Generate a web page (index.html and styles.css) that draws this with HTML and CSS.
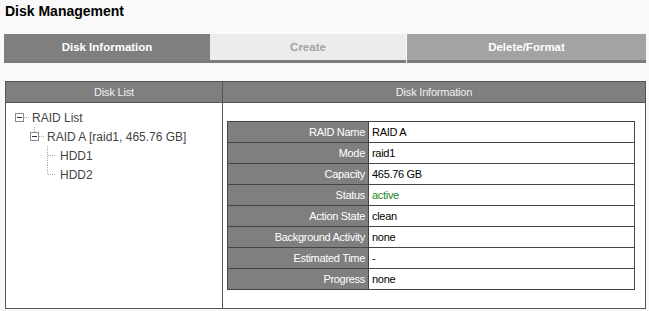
FILE: index.html
```html
<!DOCTYPE html>
<html lang="en">
<head>
  <meta charset="UTF-8">
  <title>Disk Management</title>
  <link rel="stylesheet" href="styles.css">
</head>
<body>
  <h2 class="page-title">Disk Management</h2>

  <div class="tabs">
    <div class="tab tab-active">Disk Information</div>
    <div class="tab tab-disabled">Create</div>
    <div class="tab tab-normal">Delete/Format</div>
  </div>

  <div class="panel">
    <div class="col col-left">
      <div class="col-head">Disk List</div>
      <ul class="tree">
        <li class="tree-row lvl0">
          <svg class="tree-icon" width="17" height="19" viewBox="0 0 17 19">
            <rect x="0.5" y="5.5" width="8" height="8" fill="#fff" stroke="#8c8c8c"/>
            <line x1="2" y1="9.5" x2="7" y2="9.5" stroke="#333"/>
            <line x1="9" y1="9.5" x2="14" y2="9.5" stroke="#aaa" stroke-dasharray="1 1"/>
          </svg>
          RAID List
        </li>
        <li class="tree-row lvl1">
          <svg class="tree-icon" width="17" height="19" viewBox="0 0 17 19">
            <line x1="4.5" y1="0" x2="4.5" y2="5" stroke="#aaa" stroke-dasharray="1 1"/>
            <rect x="0.5" y="5.5" width="8" height="8" fill="#fff" stroke="#8c8c8c"/>
            <line x1="2" y1="9.5" x2="7" y2="9.5" stroke="#333"/>
            <line x1="9" y1="9.5" x2="14" y2="9.5" stroke="#aaa" stroke-dasharray="1 1"/>
          </svg>
          RAID A [raid1, 465.76 GB]
        </li>
        <li class="tree-row lvl2">
          <svg class="tree-icon" width="15" height="19" viewBox="0 0 15 19">
            <line x1="2.5" y1="0" x2="2.5" y2="19" stroke="#aaa" stroke-dasharray="1 1"/>
            <line x1="3" y1="9.5" x2="10" y2="9.5" stroke="#aaa" stroke-dasharray="1 1"/>
          </svg>
          HDD1
        </li>
        <li class="tree-row lvl2">
          <svg class="tree-icon" width="15" height="19" viewBox="0 0 15 19">
            <line x1="2.5" y1="0" x2="2.5" y2="10" stroke="#aaa" stroke-dasharray="1 1"/>
            <line x1="3" y1="9.5" x2="10" y2="9.5" stroke="#aaa" stroke-dasharray="1 1"/>
          </svg>
          HDD2
        </li>
      </ul>
    </div>

    <div class="col col-right">
      <div class="col-head">Disk Information</div>
      <div class="info-wrap">
        <table class="info">
          <tr><th>RAID Name</th><td>RAID A</td></tr>
          <tr><th>Mode</th><td>raid1</td></tr>
          <tr><th>Capacity</th><td>465.76 GB</td></tr>
          <tr><th>Status</th><td class="ok">active</td></tr>
          <tr><th>Action State</th><td>clean</td></tr>
          <tr><th>Background Activity</th><td>none</td></tr>
          <tr><th>Estimated Time</th><td>-</td></tr>
          <tr><th>Progress</th><td>none</td></tr>
        </table>
      </div>
    </div>
  </div>
</body>
</html>
```

FILE: styles.css
```css
body {
  font-family: "Liberation Sans", Arial, sans-serif;
  margin: 0;
  padding: 0 3px 0 4px;
  background-color: #f9f9f9;
  color: #000;
}
.page-title {
  font-size: 14px;
  font-weight: bold;
  margin: 0;
  padding: 3px 0 0 1px;
  height: 34px;
  box-sizing: border-box;
  line-height: 17px;
}
.tabs {
  display: flex;
  width: 642px;
  height: 29px;
}
.tab {
  box-sizing: border-box;
  height: 29px;
  line-height: 26px;
  text-align: center;
  font-size: 11.5px;
  font-weight: bold;
  border-bottom: 3px solid #7a7a7a;
}
.tab-active {
  width: 206px;
  background-color: #7f7f7f;
  color: #fff;
}
.tab-disabled {
  width: 196px;
  background-color: #ececec;
  color: #a3a3a3;
  margin-right: 1px;
}
.tab-normal {
  width: 239px;
  background-color: #a3a3a3;
  color: #fff;
}
.panel {
  display: flex;
  margin: 18px 0 0 1px;
  width: 641px;
  height: 228px;
  box-sizing: border-box;
  border: 1px solid #555;
  background-color: #fff;
}
.col-head {
  height: 20px;
  line-height: 20px;
  background-color: #7f7f7f;
  border-bottom: 1px solid #555;
  color: #f0f0f0;
  text-align: center;
  font-size: 11px;
  letter-spacing: -0.2px;
}
.col-left {
  width: 216px;
  border-right: 1px solid #555;
}
.col-right {
  flex: 1;
}
.tree {
  list-style: none;
  margin: 0;
  padding: 5px 0 0 0;
}
.tree-row {
  display: flex;
  align-items: center;
  height: 19px;
  font-size: 12px;
  color: #444;
}
.tree-icon {
  flex-shrink: 0;
}
.lvl0 {
  padding-left: 9px;
}
.lvl1 {
  padding-left: 24px;
}
.lvl2 {
  padding-left: 39px;
}
.info-wrap {
  padding: 18px 10px 0 4px;
}
.info {
  width: 408px;
  border-collapse: collapse;
  border: 1px solid #444;
  font-size: 11px;
  letter-spacing: -0.3px;
}
.info th, .info td {
  height: 21px;
  border: 1px solid #444;
  padding: 0 3px;
  box-sizing: border-box;
}
.info th {
  width: 141px;
  background-color: #7f7f7f;
  color: #fff;
  font-weight: normal;
  text-align: right;
}
.info td {
  background-color: #fff;
  text-align: left;
}
.info td.ok {
  color: #1a8a1a;
}
```
